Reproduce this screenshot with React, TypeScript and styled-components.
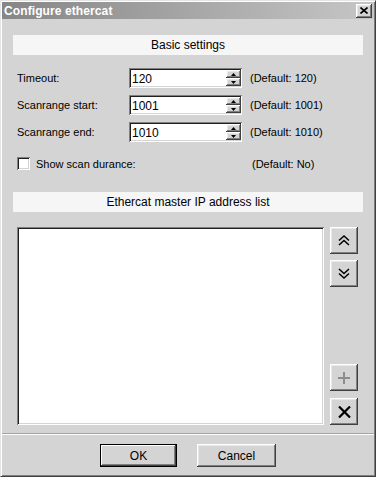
import React from "react";
import styled, { createGlobalStyle, css } from "styled-components";

const GlobalStyle = createGlobalStyle`
  html, body {
    margin: 0;
    padding: 0;
    background: #d4d4d4;
  }
  body {
    font-family: "Liberation Sans", Arial, sans-serif;
    font-size: 11px;
    color: #000;
  }
`;

const raised = css`
  background: #d4d4d4;
  box-shadow: inset -1px -1px #404040, inset 1px 1px #ffffff,
    inset -2px -2px #808080, inset 2px 2px #e8e8e8;
`;

const sunken = css`
  background: #ffffff;
  box-shadow: inset 1px 1px #808080, inset -1px -1px #ffffff,
    inset 2px 2px #202020, inset -2px -2px #d4d4d4;
`;

const Window = styled.div`
  box-sizing: border-box;
  width: 376px;
  height: 477px;
  padding: 1px;
  display: flex;
  flex-direction: column;
  background: #d4d4d4;
  border: 1px solid;
  border-color: #e4e4e4 #404040 #404040 #e4e4e4;
  box-shadow: inset 1px 1px #ffffff, inset -1px -1px #808080;
`;

const TitleBar = styled.div`
  height: 17px;
  display: flex;
  align-items: center;
  justify-content: space-between;
  padding: 0 2px 0 2px;
  background: linear-gradient(to right, #868686, #c6c6c6);
`;

const TitleText = styled.span`
  color: #ffffff;
  font-weight: bold;
  font-size: 12px;
  letter-spacing: 0.1px;
`;

const CloseButton = styled.div`
  ${raised};
  width: 16px;
  height: 14px;
  display: flex;
  align-items: center;
  justify-content: center;
`;

const Body = styled.div`
  flex: 1;
  display: flex;
  flex-direction: column;
  padding: 16px 11px 5px 11px;
`;

const SectionHeader = styled.div<{ $gap: number }>`
  height: 20px;
  line-height: 20px;
  text-align: center;
  background: #f6f6f6;
  font-size: 12px;
  margin-bottom: ${(p) => p.$gap}px;
`;

const FormGrid = styled.div`
  display: grid;
  grid-template-columns: 104px 113px auto;
  column-gap: 8px;
  row-gap: 7px;
  padding-left: 4px;
  align-items: center;
  margin-bottom: 15px;
`;

const Label = styled.span`
  font-size: 11px;
`;

const SpinField = styled.div`
  ${sunken};
  box-sizing: border-box;
  height: 20px;
  padding: 2px 1px 2px 3px;
  display: flex;
  align-items: center;
`;

const SpinValue = styled.span`
  flex: 1;
  font-size: 12px;
  padding-top: 2px;
`;

const SpinButtons = styled.div`
  display: flex;
  flex-direction: column;
  width: 15px;
  height: 16px;
`;

const SpinArrow = styled.div`
  ${raised};
  flex: 1;
  display: flex;
  align-items: center;
  justify-content: center;
`;

const CheckRow = styled.div`
  display: grid;
  grid-template-columns: 235px auto;
  align-items: center;
  padding-left: 4px;
  margin-bottom: 22px;
`;

const CheckLabel = styled.label`
  display: flex;
  align-items: center;
  gap: 6px;
  font-size: 11px;
`;

const CheckBox = styled.span`
  ${sunken};
  display: inline-block;
  width: 13px;
  height: 13px;
`;

const ListArea = styled.div`
  display: flex;
  gap: 6px;
  padding-left: 4px;
  height: 198px;
`;

const ListBox = styled.div`
  ${sunken};
  width: 307px;
  height: 100%;
`;

const SideButtons = styled.div`
  display: flex;
  flex-direction: column;
  gap: 6px;
`;

const Spacer = styled.div`
  flex: 1;
`;

const SideButton = styled.div<{ $lift?: number }>`
  ${raised};
  width: 28px;
  height: 27px;
  display: flex;
  align-items: center;
  justify-content: center;
  margin-top: ${(p) => p.$lift ?? 0}px;
`;

const Separator = styled.div`
  border-top: 1px solid #a4a4a4;
  border-bottom: 1px solid #ffffff;
`;

const Footer = styled.div`
  display: flex;
  justify-content: center;
  gap: 20px;
  padding: 9px 0 8px;
`;

const DialogButton = styled.div<{ $width: number; $isDefault?: boolean }>`
  ${raised};
  box-sizing: border-box;
  width: ${(p) => p.$width}px;
  height: 23px;
  display: flex;
  align-items: center;
  justify-content: center;
  font-size: 12px;
  ${(p) =>
    p.$isDefault &&
    css`
      box-shadow: inset 0 0 0 1px #000000, inset -2px -2px #404040,
        inset 2px 2px #ffffff, inset -3px -3px #808080;
    `}
`;

const SpinUp = () => (
  <svg width="5" height="3" viewBox="0 0 5 3">
    <path d="M2.5 0 L5 3 L0 3 Z" fill="#000" />
  </svg>
);

const SpinDown = () => (
  <svg width="5" height="3" viewBox="0 0 5 3">
    <path d="M0 0 L5 0 L2.5 3 Z" fill="#000" />
  </svg>
);

const fields = [
  { label: "Timeout:", value: "120", def: "(Default: 120)" },
  { label: "Scanrange start:", value: "1001", def: "(Default: 1001)" },
  { label: "Scanrange end:", value: "1010", def: "(Default: 1010)" },
];

export default function App() {
  return (
    <>
      <GlobalStyle />
      <Window>
        <TitleBar>
          <TitleText>Configure ethercat</TitleText>
          <CloseButton>
            <svg width="8" height="7" viewBox="0 0 8 7">
              <path d="M0.5 0.5 L7.5 6.5 M7.5 0.5 L0.5 6.5" stroke="#000" strokeWidth="1.6" />
            </svg>
          </CloseButton>
        </TitleBar>
        <Body>
          <SectionHeader $gap={13}>Basic settings</SectionHeader>
          <FormGrid>
            {fields.map((f) => (
              <React.Fragment key={f.label}>
                <Label>{f.label}</Label>
                <SpinField>
                  <SpinValue>{f.value}</SpinValue>
                  <SpinButtons>
                    <SpinArrow>
                      <SpinUp />
                    </SpinArrow>
                    <SpinArrow>
                      <SpinDown />
                    </SpinArrow>
                  </SpinButtons>
                </SpinField>
                <Label>{f.def}</Label>
              </React.Fragment>
            ))}
          </FormGrid>
          <CheckRow>
            <CheckLabel>
              <CheckBox />
              Show scan durance:
            </CheckLabel>
            <Label>(Default: No)</Label>
          </CheckRow>
          <SectionHeader $gap={15}>Ethercat master IP address list</SectionHeader>
          <ListArea>
            <ListBox />
            <SideButtons>
              <SideButton>
                <svg width="12" height="11" viewBox="0 0 12 11">
                  <path d="M1 5.5 L6 1 L11 5.5 M1 10 L6 5.5 L11 10" fill="none" stroke="#000" strokeWidth="1.5" />
                </svg>
              </SideButton>
              <SideButton>
                <svg width="12" height="11" viewBox="0 0 12 11">
                  <path d="M1 1 L6 5.5 L11 1 M1 5.5 L6 10 L11 5.5" fill="none" stroke="#000" strokeWidth="1.5" />
                </svg>
              </SideButton>
              <Spacer />
              <SideButton>
                <svg width="14" height="14" viewBox="0 0 14 14">
                  <path d="M7 1 V13 M1 7 H13" stroke="#8c8c8c" strokeWidth="2" />
                </svg>
              </SideButton>
              <SideButton $lift={1}>
                <svg width="13" height="12" viewBox="0 0 13 12">
                  <path d="M1 0.5 L12 11.5 M12 0.5 L1 11.5" stroke="#000" strokeWidth="2.2" />
                </svg>
              </SideButton>
            </SideButtons>
          </ListArea>
        </Body>
        <Separator />
        <Footer>
          <DialogButton $width={77} $isDefault>
            OK
          </DialogButton>
          <DialogButton $width={79}>Cancel</DialogButton>
        </Footer>
      </Window>
    </>
  );
}
